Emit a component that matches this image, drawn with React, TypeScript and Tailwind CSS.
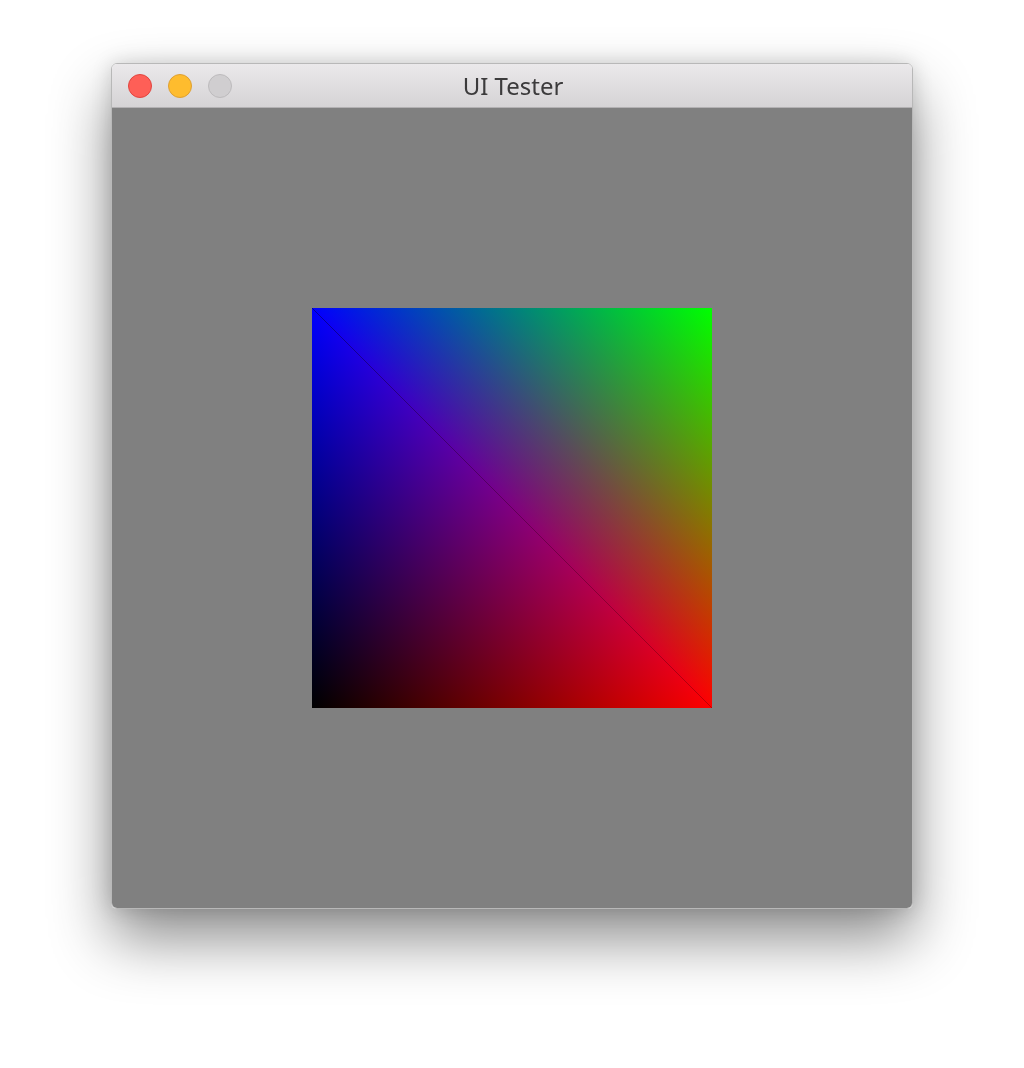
export default function App() {
  return (
    <div className="min-h-[1068px] bg-white pl-[111px] pt-[63px]" style={{ fontFamily: '"Noto Sans", "Liberation Sans", sans-serif' }}>
      <div className="flex h-[846px] w-[802px] flex-col overflow-hidden rounded-[6px] border border-[#b8b8b8] shadow-[0_30px_60px_rgba(0,0,0,0.45),0_0_20px_rgba(0,0,0,0.15)]">
        {/* Title bar */}
        <div className="relative flex h-[44px] items-center border-b border-[#b3b1b3] bg-gradient-to-b from-[#ebe9eb] to-[#d5d3d5]">
          <div className="flex items-center gap-[16px] pl-[16px]">
            <span className="h-[24px] w-[24px] rounded-full border border-[#e1453f] bg-[#fe5f57]" />
            <span className="h-[24px] w-[24px] rounded-full border border-[#dea032] bg-[#febc2e]" />
            <span className="h-[24px] w-[24px] rounded-full border border-[#bdbbbd] bg-[#d0ced0]" />
          </div>
          <div className="absolute inset-0 flex items-center justify-center pl-[2px] text-[24px] text-[#3c3b3c]">UI Tester</div>
        </div>
        {/* Content */}
        <div className="flex flex-1 items-center justify-center bg-[#808080]">
          <svg width="400" height="400" viewBox="0 0 400 400" className="block bg-black">
            <defs>
              <linearGradient id="rx" gradientUnits="userSpaceOnUse" x1="0" y1="0" x2="400" y2="0">
                <stop offset="0" stopColor="#000" />
                <stop offset="1" stopColor="#f00" />
              </linearGradient>
              <linearGradient id="ry" gradientUnits="userSpaceOnUse" x1="0" y1="0" x2="0" y2="400">
                <stop offset="0" stopColor="#000" />
                <stop offset="1" stopColor="#f00" />
              </linearGradient>
              <linearGradient id="by" gradientUnits="userSpaceOnUse" x1="0" y1="0" x2="0" y2="400">
                <stop offset="0" stopColor="#00f" />
                <stop offset="1" stopColor="#000" />
              </linearGradient>
              <linearGradient id="bx" gradientUnits="userSpaceOnUse" x1="0" y1="0" x2="400" y2="0">
                <stop offset="0" stopColor="#00f" />
                <stop offset="1" stopColor="#000" />
              </linearGradient>
              <linearGradient id="gd" gradientUnits="userSpaceOnUse" x1="0" y1="400" x2="400" y2="0">
                <stop offset="0.5" stopColor="#000" />
                <stop offset="1" stopColor="#0f0" />
              </linearGradient>
            </defs>
            {/* lower-left triangle */}
            <polygon points="0,0 0,400 400,400" fill="url(#rx)" />
            <polygon points="0,0 0,400 400,400" fill="url(#by)" style={{ mixBlendMode: "screen" }} />
            {/* upper-right triangle */}
            <polygon points="0,0 400,0 400,400" fill="url(#ry)" />
            <polygon points="0,0 400,0 400,400" fill="url(#bx)" style={{ mixBlendMode: "screen" }} />
            <polygon points="0,0 400,0 400,400" fill="url(#gd)" style={{ mixBlendMode: "screen" }} />
          </svg>
        </div>
      </div>
    </div>
  );
}
